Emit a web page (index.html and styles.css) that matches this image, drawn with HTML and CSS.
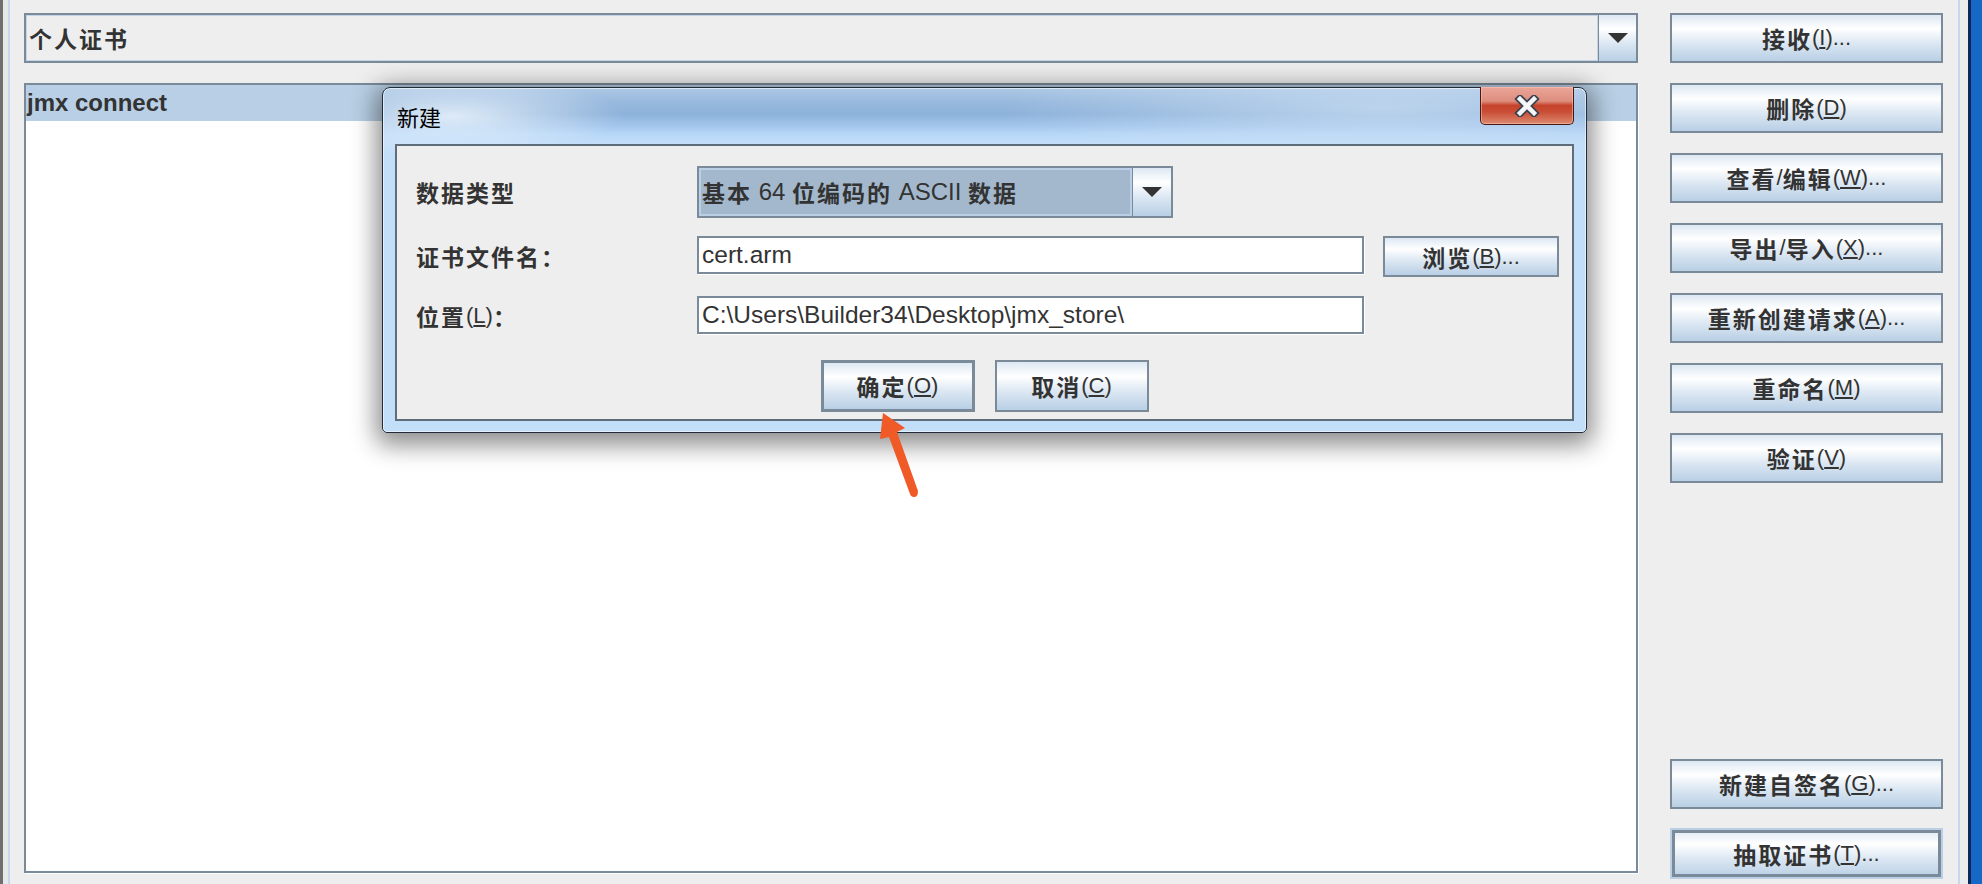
FILE: index.html
```html
<!DOCTYPE html>
<html lang="zh-CN">
<head>
<meta charset="utf-8">
<title>证书</title>
<link rel="stylesheet" href="styles.css">
</head>
<body>
<div class="app">
  <div class="edge-l"></div>
  <div class="main">
    <div class="left-col">
      <div class="combo top-combo">
        <div class="combo-val">个人证书</div>
        <div class="combo-arrow"><span class="tri"></span></div>
      </div>
      <div class="list">
        <div class="list-row sel">jmx connect</div>
      </div>
    </div>
    <div class="btn-col">
      <div class="btn">接收<span class="l">(<u>I</u>)...</span></div>
      <div class="btn">删除<span class="l">(<u>D</u>)</span></div>
      <div class="btn">查看<span class="l">/</span>编辑<span class="l">(<u>W</u>)...</span></div>
      <div class="btn">导出<span class="l">/</span>导入<span class="l">(<u>X</u>)...</span></div>
      <div class="btn">重新创建请求<span class="l">(<u>A</u>)...</span></div>
      <div class="btn">重命名<span class="l">(<u>M</u>)</span></div>
      <div class="btn">验证<span class="l">(<u>V</u>)</span></div>
      <div class="btn push">新建自签名<span class="l">(<u>G</u>)...</span></div>
      <div class="btn default">抽取证书<span class="l">(<u>T</u>)...</span></div>
    </div>
  </div>
  <div class="edge-r"></div>
</div>

<div class="dialog">
  <div class="titlebar">
    <span class="title">新建</span>
    <div class="close">
      <svg width="26" height="22" viewBox="0 0 26 22">
        <path d="M6 4 L20 18 M20 4 L6 18" stroke="#3b4350" stroke-width="8" stroke-linecap="square" fill="none"/>
        <path d="M6 4 L20 18 M20 4 L6 18" stroke="#f4f6f8" stroke-width="4.5" stroke-linecap="square" fill="none"/>
      </svg>
    </div>
  </div>
  <div class="client">
    <div class="drow r1">
      <div class="lbl h52">数据类型</div>
      <div class="combo dcombo">
        <div class="combo-val">基本<span class="l">&nbsp;64&nbsp;</span>位编码的<span class="l">&nbsp;ASCII&nbsp;</span>数据</div>
        <div class="combo-arrow"><span class="tri"></span></div>
      </div>
    </div>
    <div class="drow r2">
      <div class="lbl h38">证书文件名：</div>
      <div class="field">cert.arm</div>
      <div class="btn browse">浏览<span class="l">(<u>B</u>)...</span></div>
    </div>
    <div class="drow r3">
      <div class="lbl h38">位置<span class="l">(<u>L</u>)</span>：</div>
      <div class="field">C:\Users\Builder34\Desktop\jmx_store\</div>
    </div>
    <div class="dbtns">
      <div class="btn dbtn ok">确定<span class="l">(<u>O</u>)</span></div>
      <div class="btn dbtn">取消<span class="l">(<u>C</u>)</span></div>
    </div>
  </div>
</div>

<svg class="arrow" width="1982" height="884" viewBox="0 0 1982 884">
  <path d="M883 413 L905 428 L897 432 L918 491 Q918 497 914 497 Q911 497 910 494 L889 437 L880 439 Z" fill="#f05a26"/>
</svg>
</body>
</html>
```

FILE: styles.css
```css
html, body {
  margin: 0;
  padding: 0;
}

body {
  width: 1982px;
  height: 884px;
  overflow: hidden;
  position: relative;
  background: #eeeeee;
  color: #333333;
  font-family: "Liberation Sans", "Noto Sans CJK SC", sans-serif;
}

.l {
  font-weight: 400;
  letter-spacing: 0;
  font-size: 22px;
}

u {
  text-underline-offset: 2px;
}

/* ---------- main window ---------- */
.app {
  display: flex;
  height: 884px;
}

.edge-l {
  width: 5px;
  flex: none;
  border-left: 3px solid #6f6f6f;
  border-right: 2px solid #c6d8ee;
  background: #e8e8e8;
}

.edge-r {
  width: 24px;
  flex: none;
  background: linear-gradient(to right,
    #c6d8ee 0, #c6d8ee 2px,
    #ececec 2px, #ececec 10px,
    #0c2a58 10px, #0c2a58 13px,
    #1767c6 13px, #1767c6 100%);
}

.main {
  flex: 1;
  display: flex;
  gap: 32px;
  padding: 13px 15px 5px 14px;
}

.left-col {
  width: 1614px;
  flex: none;
  display: flex;
  flex-direction: column;
  gap: 20px;
  padding-bottom: 6px;
}

/* combo boxes */
.combo {
  display: flex;
  box-sizing: border-box;
  border: 2px solid #7a8a99;
  background: #eeeeee;
}

.top-combo {
  height: 50px;
  flex: none;
}

.combo-val {
  flex: 1;
  display: flex;
  align-items: center;
  padding-left: 2px;
  border: 1px solid #c4d4e4;
  font-weight: 700;
  font-size: 23px;
  letter-spacing: 2px;
  white-space: nowrap;
}

.combo-arrow {
  width: 37px;
  flex: none;
  border-left: 1px solid #7a8a99;
  background: linear-gradient(#dde8f3 0%, #ffffff 30%, #dde8f3 60%, #b8cfe5 100%);
  display: flex;
  align-items: center;
  justify-content: center;
}

.tri {
  width: 0;
  height: 0;
  border-left: 10px solid transparent;
  border-right: 10px solid transparent;
  border-top: 10px solid #333333;
}

/* list */
.list {
  flex: 1;
  box-sizing: border-box;
  border: 2px solid #7a8a99;
  background: #ffffff;
  box-shadow: 1px 1px 0 #ffffff;
}

.list-row {
  height: 36px;
  display: flex;
  align-items: center;
  padding-left: 1px;
  font-weight: 700;
  font-size: 24px;
  color: #333333;
}

.list-row.sel {
  background: #b8cfe5;
}

/* buttons */
.btn-col {
  width: 273px;
  flex: none;
  display: flex;
  flex-direction: column;
  gap: 20px;
}

.btn {
  height: 50px;
  flex: none;
  box-sizing: border-box;
  border: 2px solid #7a8a99;
  background: linear-gradient(#dde8f3 0%, #ffffff 30%, #dde8f3 60%, #b8cfe5 100%);
  display: flex;
  align-items: center;
  justify-content: center;
  font-weight: 700;
  font-size: 23px;
  letter-spacing: 2px;
  color: #333333;
  white-space: nowrap;
}

.btn.push {
  margin-top: auto;
}

.btn.default {
  height: 51px;
  margin-top: -1px;
  border: 2px solid #b8cfe5;
  box-shadow: inset 0 0 0 3px #7a8a99;
}

/* ---------- dialog ---------- */
.dialog {
  position: absolute;
  left: 382px;
  top: 87px;
  width: 1205px;
  height: 346px;
  box-sizing: border-box;
  border: 1px solid #1f2b39;
  border-radius: 8px 8px 5px 5px;
  padding: 0 12px 11px 12px;
  display: flex;
  flex-direction: column;
  background:
    radial-gradient(ellipse 170px 40px at 70px 28px, rgba(236, 244, 252, 0.85), rgba(236, 244, 252, 0)),
    radial-gradient(ellipse 380px 60px at 1000px 20px, rgba(205, 224, 244, 0.7), rgba(205, 224, 244, 0)),
    linear-gradient(to bottom,
      #adc8e5 0px, #98b9dd 14px, #8db2da 26px, #a3c6ec 38px,
      #b7d7f7 46px, #c3def9 56px, #c3def9 100%);
  box-shadow:
    0 6px 24px 6px rgba(0, 0, 0, 0.45),
    inset 0 0 0 1px rgba(255, 255, 255, 0.55);
}

.titlebar {
  height: 56px;
  flex: none;
  display: flex;
  align-items: flex-start;
  padding-left: 2px;
}

.title {
  margin-top: 14px;
  line-height: 28px;
  font-size: 22px;
  color: #000000;
  font-family: "Noto Sans CJK SC", sans-serif;
}

.close {
  margin-left: auto;
  margin-top: -1px;
  width: 94px;
  height: 38px;
  box-sizing: border-box;
  border: 1px solid #4a1812;
  border-top: none;
  border-radius: 0 0 5px 5px;
  background: linear-gradient(#eaa699 0%, #de8e7e 38%, #c5432b 50%, #c94c34 66%, #dc8a70 100%);
  box-shadow: inset 0 0 0 1px rgba(255, 200, 190, 0.5);
  display: flex;
  align-items: center;
  justify-content: center;
}

.client {
  flex: 1;
  border: 2px solid #5f6d7b;
  background: #eeeeee;
  display: flex;
  flex-direction: column;
}

.drow {
  display: flex;
  align-items: flex-start;
  padding-left: 19px;
}

.r1 { margin-top: 20px; }
.r2 { margin-top: 18px; }
.r3 { margin-top: 19px; }

.lbl {
  width: 281px;
  flex: none;
  display: flex;
  align-items: center;
  font-weight: 700;
  font-size: 23px;
  letter-spacing: 2px;
  color: #333333;
}

.h52 { height: 52px; }
.h38 { height: 40px; }

.dcombo {
  width: 476px;
  height: 52px;
}

.dcombo .combo-val {
  background: #a3b8cc;
  border: 2px solid #b8cfe5;
  padding-left: 1px;
}

.dcombo .l {
  font-size: 24px;
}

.dcombo .combo-arrow {
  width: 38px;
}

.field {
  width: 667px;
  height: 38px;
  flex: none;
  box-sizing: border-box;
  border: 2px solid #7a8a99;
  box-shadow: 1px 1px 0 #ffffff;
  background: #ffffff;
  display: flex;
  align-items: center;
  padding-left: 3px;
  font-size: 24.5px;
  color: #333333;
  white-space: nowrap;
}

.btn.browse {
  width: 176px;
  height: 41px;
  margin-left: 19px;
}

.dbtns {
  display: flex;
  justify-content: center;
  gap: 20px;
  margin-top: 24px;
}

.btn.dbtn {
  width: 154px;
  height: 52px;
}

.btn.ok {
  border-width: 3px;
}

/* annotation arrow */
.arrow {
  position: absolute;
  left: 0;
  top: 0;
  pointer-events: none;
}
```
